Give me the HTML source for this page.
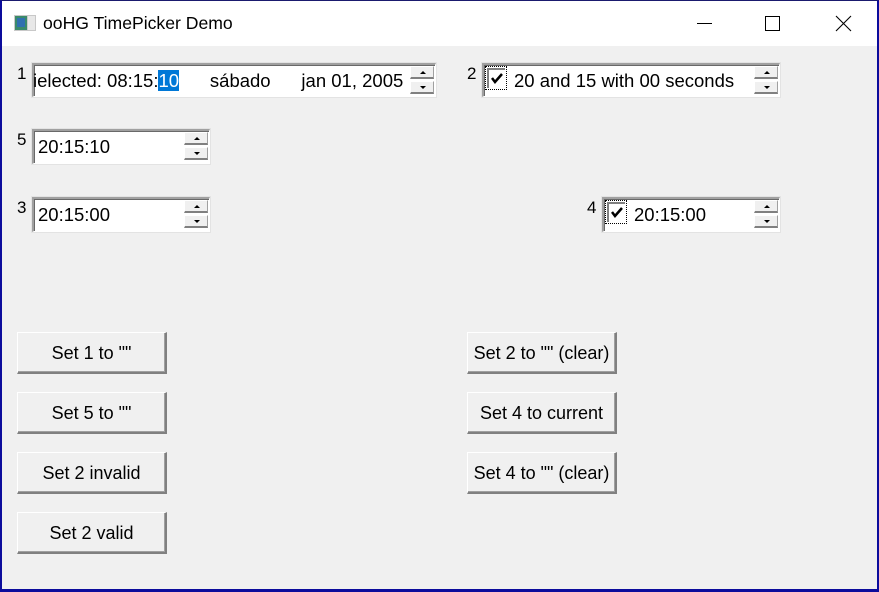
<!DOCTYPE html>
<html><head><meta charset="utf-8"><style>
*{margin:0;padding:0;box-sizing:border-box}
body{width:879px;height:592px;overflow:hidden;background:#f0f0f0;font-family:"Liberation Sans",Arial,sans-serif;position:relative}
.win{position:absolute;left:0;top:0;width:879px;height:592px;border-left:2px solid #0c0c9c;border-right:2px solid #0c0c9c;border-bottom:3px solid #0c0c9c;border-top:1px solid #1a1a6e}
.title{position:absolute;left:2px;top:1px;width:875px;height:45px;background:#fff}
.t{position:absolute;font-size:16px;color:#000;white-space:nowrap}
.lbl{position:absolute;font-size:17px;color:#000}
.fld{position:absolute;background:#fff;border-top:2px solid #a0a0a0;border-left:2px solid #a0a0a0;border-right:1px solid #fff;border-bottom:1px solid #fff;box-shadow:inset 1px 1px 0 #696969,0 0 0 1px #e3e3e3}
.fld .tx{position:absolute;left:4px;top:5px;font-size:18.5px;color:#000;white-space:nowrap}
.sp{position:absolute;width:24px;height:13px;background:#f0f0f0;border-top:1px solid #fff;border-left:1px solid #fff;border-right:1px solid #a0a0a0;border-bottom:2px solid #808080}
.sp:after{content:"";position:absolute;left:9px;top:4px;border-left:3px solid transparent;border-right:3px solid transparent}
.up:after{border-bottom:3px solid #000}
.dn:after{border-top:3px solid #000}
.btn{position:absolute;width:150px;height:42px;background:#f0f0f0;border-top:1px solid #fff;border-left:1px solid #fff;border-right:2px solid #808080;border-bottom:2px solid #808080;box-shadow:inset -1px -1px 0 #a0a0a0;font-size:18px;text-align:center;line-height:40px;color:#000;white-space:nowrap}
.cb{position:absolute;width:22px;height:24px;border:1px dotted #000;top:1px;left:1px}
.cb i{position:absolute;left:1px;top:1px;width:18px;height:20px;border-top:2px solid #808080;border-left:2px solid #808080;background:#fff}
.cb svg{position:absolute;left:5px;top:6px}
</style></head><body>
<div class="win"></div>
<div class="title"></div>
<svg style="position:absolute;left:14px;top:15px" width="22" height="16"><rect x="0" y="0" width="22" height="16" fill="#c8c8c8"/><rect x="1" y="1" width="12" height="14" fill="#3a8a6a"/><rect x="3" y="3" width="8" height="9" fill="#3070b0"/><rect x="14" y="1" width="7" height="14" fill="#e8e8e8"/></svg>
<div class="t" style="left:43px;top:13px;font-size:17.6px">ooHG TimePicker Demo</div>
<div style="position:absolute;left:697px;top:23px;width:15px;height:1px;background:#000"></div>
<div style="position:absolute;left:765px;top:16px;width:15px;height:15px;border:1px solid #000"></div>
<svg style="position:absolute;left:835px;top:15px" width="17" height="17"><path d="M1 1L16 16M16 1L1 16" stroke="#000" stroke-width="1.1"/></svg>

<div class="lbl" style="left:17px;top:64px">1</div>
<div class="fld" style="left:32px;top:63px;width:404px;height:34px;overflow:hidden">
<div class="tx" style="left:-1px">ielected: 08:15:<span style="background:#0078d7;color:#fff">10</span>&nbsp;&nbsp;&nbsp;&nbsp;&nbsp;&nbsp;sábado&nbsp;&nbsp;&nbsp;&nbsp;&nbsp;&nbsp;jan 01, 2005</div>
<div class="sp up" style="left:376px;top:1px"></div><div class="sp dn" style="left:376px;top:16px"></div>
</div>

<div class="lbl" style="left:467px;top:64px">2</div>
<div class="fld" style="left:482px;top:63px;width:298px;height:34px">
<div class="cb"><i></i><svg width="12" height="11"><path d="M1 5L4 9L11 1" stroke="#000" stroke-width="2.5" fill="none"/></svg></div>
<div class="tx" style="left:30px">20 and 15 with 00 seconds</div>
<div class="sp up" style="left:270px;top:1px"></div><div class="sp dn" style="left:270px;top:16px"></div>
</div>

<div class="lbl" style="left:17px;top:130px">5</div>
<div class="fld" style="left:32px;top:129px;width:178px;height:35px">
<div class="tx">20:15:10</div>
<div class="sp up" style="left:150px;top:1px"></div><div class="sp dn" style="left:150px;top:16px"></div>
</div>

<div class="lbl" style="left:17px;top:198px">3</div>
<div class="fld" style="left:32px;top:197px;width:178px;height:35px">
<div class="tx">20:15:00</div>
<div class="sp up" style="left:150px;top:1px"></div><div class="sp dn" style="left:150px;top:16px"></div>
</div>

<div class="lbl" style="left:587px;top:198px">4</div>
<div class="fld" style="left:602px;top:197px;width:178px;height:35px">
<div class="cb"><i></i><svg width="12" height="11"><path d="M1 5L4 9L11 1" stroke="#000" stroke-width="2.5" fill="none"/></svg></div>
<div class="tx" style="left:30px">20:15:00</div>
<div class="sp up" style="left:150px;top:1px"></div><div class="sp dn" style="left:150px;top:16px"></div>
</div>

<div class="btn" style="left:17px;top:332px">Set 1 to ""</div>
<div class="btn" style="left:17px;top:392px">Set 5 to ""</div>
<div class="btn" style="left:17px;top:452px">Set 2 invalid</div>
<div class="btn" style="left:17px;top:512px">Set 2 valid</div>
<div class="btn" style="left:467px;top:332px">Set 2 to "" (clear)</div>
<div class="btn" style="left:467px;top:392px">Set 4 to current</div>
<div class="btn" style="left:467px;top:452px">Set 4 to "" (clear)</div>
</body></html>
